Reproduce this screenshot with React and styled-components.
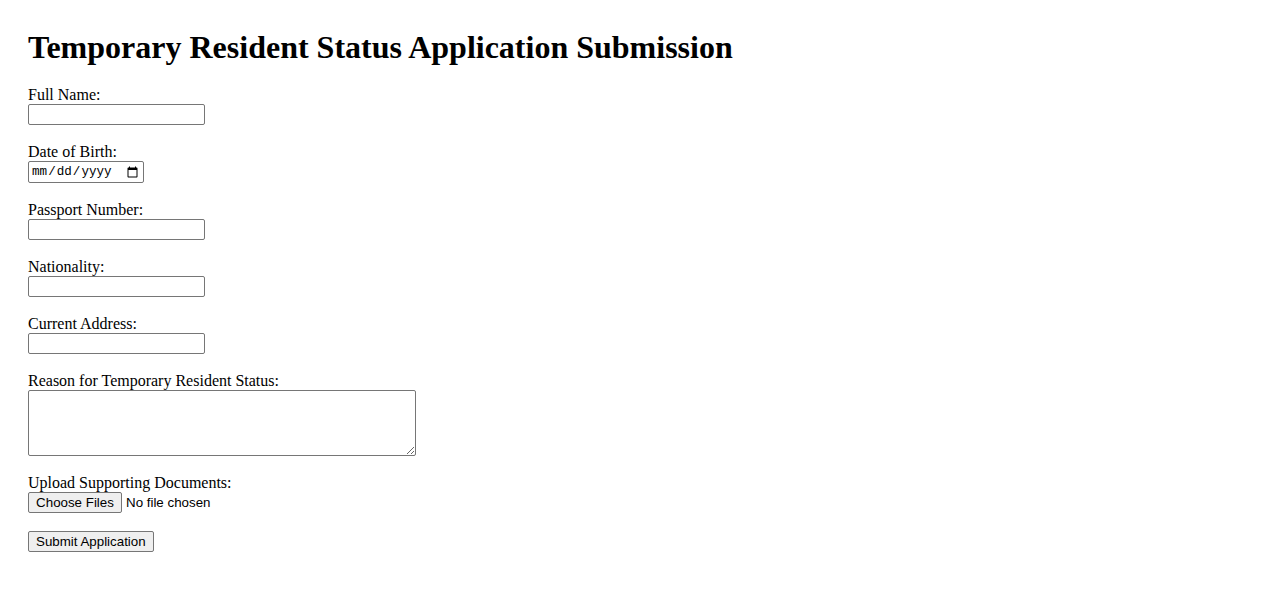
import React from 'react'
import styled, { createGlobalStyle } from 'styled-components'

const GlobalStyle = createGlobalStyle`
  body {
    margin: 0;
    background: #ffffff;
    font-family: "Liberation Serif", "Times New Roman", serif;
    color: #000000;
  }
`;

const Page = styled.div`
  padding: 29px 28px;
`;

const Title = styled.h1`
  margin: 0 0 20px 0;
  font-size: 32px;
  font-weight: bold;
  line-height: 37px;
`;

const Form = styled.form`
  display: flex;
  flex-direction: column;
  align-items: flex-start;
  gap: 18px;
`;

const Field = styled.div`
  display: flex;
  flex-direction: column;
  align-items: flex-start;
`;

const Label = styled.label`
  font-size: 16px;
  line-height: 18px;
`;

const TextInput = styled.input`
  box-sizing: border-box;
  width: ${(props) => props.width || '177px'};
  height: ${(props) => props.height || '21px'};
  margin: 0;
  padding: 1px 2px;
  border: 1px solid #767676;
  border-radius: 2px;
  font-family: "Liberation Sans", Arial, sans-serif;
  font-size: 13.33px;
  background: #ffffff;
`;

const DateInput = styled(TextInput)`
  font-family: "Liberation Mono", "DejaVu Sans Mono", monospace;
  font-size: 12.6px;
  color: #000000;
`;

const TextArea = styled.textarea`
  box-sizing: border-box;
  width: 388px;
  height: 66px;
  margin: 0;
  padding: 2px;
  border: 1px solid #767676;
  border-radius: 2px;
  font-family: "Liberation Mono", monospace;
  font-size: 13.33px;
  resize: both;
`;

const FileRow = styled.div`
  display: flex;
  align-items: center;
  gap: 4px;
  font-family: "Liberation Sans", Arial, sans-serif;
  font-size: 13.33px;
`;

const HiddenFile = styled.input`
  display: none;
`;

const Button = styled.button`
  box-sizing: border-box;
  height: 21px;
  margin: 0;
  padding: 1px 7px;
  border: 1px solid #767676;
  border-radius: 2px;
  background: #efefef;
  font-family: "Liberation Sans", Arial, sans-serif;
  font-size: 13.33px;
  line-height: 17px;
  color: #000000;
  cursor: pointer;
`;

const FileButton = styled(Button).attrs({ as: 'label' })`
  display: inline-flex;
  align-items: center;
  width: 94px;
  justify-content: center;
`;

const App = () => {
  return (
    <>
      <GlobalStyle />
      <Page>
        <Title>Temporary Resident Status Application Submission</Title>
        <Form onSubmit={(e) => e.preventDefault()}>
          <Field>
            <Label htmlFor="fullName">Full Name:</Label>
            <TextInput id="fullName" type="text" />
          </Field>
          <Field>
            <Label htmlFor="dob">Date of Birth:</Label>
            <DateInput id="dob" type="date" width="116px" height="22px" />
          </Field>
          <Field>
            <Label htmlFor="passport">Passport Number:</Label>
            <TextInput id="passport" type="text" />
          </Field>
          <Field>
            <Label htmlFor="nationality">Nationality:</Label>
            <TextInput id="nationality" type="text" />
          </Field>
          <Field>
            <Label htmlFor="address">Current Address:</Label>
            <TextInput id="address" type="text" />
          </Field>
          <Field>
            <Label htmlFor="reason">Reason for Temporary Resident Status:</Label>
            <TextArea id="reason" />
          </Field>
          <Field>
            <Label htmlFor="docs">Upload Supporting Documents:</Label>
            <FileRow>
              <FileButton htmlFor="docs">Choose Files</FileButton>
              <span>No file chosen</span>
              <HiddenFile id="docs" type="file" multiple />
            </FileRow>
          </Field>
          <Button type="submit">Submit Application</Button>
        </Form>
      </Page>
    </>
  )
}

export default App
